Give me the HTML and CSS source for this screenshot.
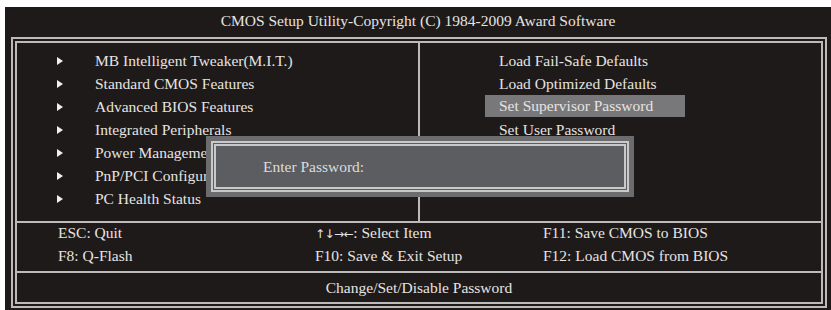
FILE: index.html
```html
<!DOCTYPE html>
<html>
<head>
  <title>CMOS Setup Utility</title>
  <link rel="stylesheet" href="styles.css">
</head>
<body>

<div class="screen">
  <div class="title">CMOS Setup Utility-Copyright (C) 1984-2009 Award Software</div>

  <div class="frame">
    <div class="menu">
      <ul class="menu-col left">
        <li><span class="arrow"></span>MB Intelligent Tweaker(M.I.T.)</li>
        <li><span class="arrow"></span>Standard CMOS Features</li>
        <li><span class="arrow"></span>Advanced BIOS Features</li>
        <li><span class="arrow"></span>Integrated Peripherals</li>
        <li><span class="arrow"></span>Power Management Setup</li>
        <li><span class="arrow"></span>PnP/PCI Configurations</li>
        <li><span class="arrow"></span>PC Health Status</li>
      </ul>
      <ul class="menu-col right">
        <li>Load Fail-Safe Defaults</li>
        <li>Load Optimized Defaults</li>
        <li class="selected">Set Supervisor Password</li>
        <li>Set User Password</li>
        <li>Save &amp; Exit Setup</li>
        <li>Exit Without Saving</li>
      </ul>
    </div>

    <div class="keys">
      <span>ESC: Quit</span>
      <span><span class="key-arrows">&uarr;&darr;&rarr;&larr;</span>: Select Item</span>
      <span>F11: Save CMOS to BIOS</span>
      <span>F8: Q-Flash</span>
      <span>F10: Save &amp; Exit Setup</span>
      <span>F12: Load CMOS from BIOS</span>
    </div>

    <div class="help">Change/Set/Disable Password</div>
  </div>

  <!-- password prompt lies over the menu -->
  <div class="dialog">
    <div class="dialog-inner">Enter Password:</div>
  </div>
</div>

</body>
</html>
```

FILE: styles.css
```css
body {
  margin: 0;
  background-color: #fff;
  font-family: "Liberation Serif", "Times New Roman", serif;
}

.screen {
  position: relative;
  margin: 7px 0 0 5px;
  width: 826px;
  height: 303px;
  background-color: #1e1a19;
  color: #e6e4e2;
  font-size: 15.5px;
}

.title {
  height: 30px;
  line-height: 28px;
  text-align: center;
}

.frame {
  margin-left: 6px;
  width: 804px;
  height: 259px;
  border: 6px double #bdbbb9;
  display: flex;
  flex-direction: column;
}

.menu {
  display: flex;
  height: 178px;
  border-bottom: 2px solid #bdbbb9;
}

.menu-col {
  list-style: none;
  margin: 0;
  padding: 6px 0 0 0;
}

.menu-col li {
  height: 23px;
  line-height: 23px;
  white-space: nowrap;
}

.left {
  width: 401px;
  border-right: 2px solid #bdbbb9;
  overflow: hidden;
}

.left li {
  display: flex;
  align-items: center;
  padding-left: 40px;
}

.arrow {
  width: 0;
  height: 0;
  border-top: 4.5px solid transparent;
  border-bottom: 4.5px solid transparent;
  border-left: 6px solid #f2f0ee;
  margin-right: 32px;
}

.right {
  padding-left: 65px;
}

.right li {
  width: 186px;
  padding-left: 14px;
}

.right li.selected {
  height: 22px;
  line-height: 22px;
  margin-bottom: 1px;
  background-color: #78787a;
}

.keys {
  height: 48px;
  padding-left: 41px;
  display: grid;
  grid-template-columns: 257px 228px 1fr;
  grid-auto-rows: 23px;
  align-content: start;
  line-height: 19px;
  border-bottom: 2px solid #bdbbb9;
}

.key-arrows {
  font-family: "DejaVu Sans", sans-serif;
  font-size: 12px;
  letter-spacing: -0.5px;
}

.help {
  flex: 1;
  display: flex;
  align-items: center;
  justify-content: center;
}

.dialog {
  position: absolute;
  left: 201px;
  top: 129px;
  width: 418px;
  height: 51px;
  padding: 5px;
  background-color: #6c6c6e;
}

.dialog-inner {
  height: 100%;
  box-sizing: border-box;
  border: 5px double #c9c9c9;
  background-color: #5c5d61;
  padding-left: 47px;
  display: flex;
  align-items: center;
  color: #dcdcdc;
}
```
